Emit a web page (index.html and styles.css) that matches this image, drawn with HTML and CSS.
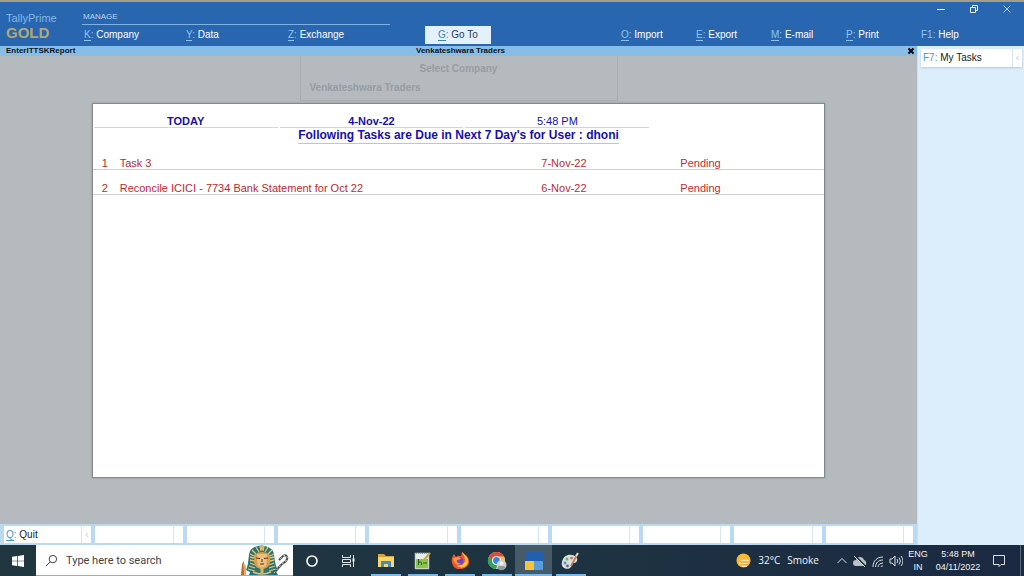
FILE: index.html
```html
<!DOCTYPE html>
<html lang="en">
<head>
<meta charset="utf-8">
<meta name="viewport" content="width=device-width, initial-scale=1">
<title>TallyPrime Gold</title>
<link rel="stylesheet" href="styles.css">
</head>
<body>
<header class="topbar">
  <div class="brand"><span class="brand-name">TallyPrime</span><span class="brand-tier">GOLD</span></div>
  <nav class="manage">
    <div class="manage-title">MANAGE</div>
    <div class="manage-items">
      <button class="menu"><span class="key line">K</span><span class="colon">:</span> Company</button>
      <button class="menu"><span class="key line">Y</span><span class="colon">:</span> Data</button>
      <button class="menu"><span class="key line">Z</span><span class="colon">:</span> Exchange</button>
    </div>
  </nav>
  <button class="menu goto"><span class="key line">G</span><span class="colon">:</span> Go To</button>
  <div class="right">
    <div class="window-controls">
      <button class="win" aria-label="Minimize"><svg viewBox="0 0 10 10"><path d="M1 5.500h8"/></svg></button>
      <button class="win" aria-label="Restore"><svg viewBox="0 0 10 10"><path d="M1.500 3.500h5v5h-5zM3.500 3.500v-2h5v5h-2"/></svg></button>
      <button class="win dim" aria-label="Close window"><svg viewBox="0 0 10 10"><path d="M1.500 1.500l7 7M8.500 1.500l-7 7"/></svg></button>
    </div>
    <nav class="right-items">
      <button class="menu"><span class="key line">O</span><span class="colon">:</span> Import</button>
      <button class="menu"><span class="key line">E</span><span class="colon">:</span> Export</button>
      <button class="menu"><span class="key line">M</span><span class="colon">:</span> E-mail</button>
      <button class="menu"><span class="key line">P</span><span class="colon">:</span> Print</button>
      <button class="menu"><span class="key">F1</span><span class="colon">:</span> Help</button>
    </nav>
  </div>
</header>

<div class="middle">
  <main class="main">
    <div class="titlebar">
      <span class="report-name">EnterITTSKReport</span>
      <span class="company">Venkateshwara Traders</span>
      <button class="close" aria-label="Close report"><svg viewBox="0 0 8 8"><path d="M1.500 1.500l5 5M6.500 1.500l-5 5"/></svg></button>
    </div>
    <div class="workspace">
      <div class="underlay">
        <div class="underlay-title">Select Company</div>
        <div class="underlay-item">Venkateshwara Traders</div>
      </div>
      <section class="report">
        <div class="today">
          <strong>TODAY</strong><strong>4-Nov-22</strong><span>5:48 PM</span>
        </div>
        <h1 class="heading"><span>Following Tasks are Due in Next 7 Day's for User : dhoni</span></h1>
        <table class="tasks">
          <colgroup><col class="c-no"><col class="c-task"><col class="c-date"><col class="c-status"></colgroup>
          <tbody>
            <tr><td class="no">1</td><td>Task 3</td><td>7-Nov-22</td><td>Pending</td></tr>
            <tr><td class="no">2</td><td>Reconcile ICICI - 7734 Bank Statement for Oct 22</td><td>6-Nov-22</td><td>Pending</td></tr>
          </tbody>
        </table>
      </section>
    </div>
    <div class="actions">
      <button class="action"><span class="action-text"><span class="key line">Q</span><span class="colon">:</span> Quit</span><span class="more">‹</span></button>
      <button class="action" aria-label="Empty 2"><span class="action-text"></span><span class="more"></span></button>
      <button class="action" aria-label="Empty 3"><span class="action-text"></span><span class="more"></span></button>
      <button class="action" aria-label="Empty 4"><span class="action-text"></span><span class="more"></span></button>
      <button class="action" aria-label="Empty 5"><span class="action-text"></span><span class="more"></span></button>
      <button class="action" aria-label="Empty 6"><span class="action-text"></span><span class="more"></span></button>
      <button class="action" aria-label="Empty 7"><span class="action-text"></span><span class="more"></span></button>
      <button class="action" aria-label="Empty 8"><span class="action-text"></span><span class="more"></span></button>
      <button class="action" aria-label="Empty 9"><span class="action-text"></span><span class="more"></span></button>
      <button class="action" aria-label="Empty 10"><span class="action-text"></span><span class="more"></span></button>
    </div>
  </main>
  <aside class="side">
    <button class="side-button"><span class="action-text"><span class="key">F7</span><span class="colon">:</span> My Tasks</span><span class="more">‹</span></button>
  </aside>
</div>

<footer class="taskbar">
  <button class="start" aria-label="Start"><svg viewBox="0 0 12 12"><path fill="#fff" d="M0 1.700L5.300 1v4.700H0zM6 .9L12 0v5.700H6zM0 6.300h5.300V11L0 10.300zM6 6.300h6V12l-6-.9z"/></svg></button>
  <div class="search">
    <svg class="lens" viewBox="0 0 14 14"><circle cx="8.500" cy="5.500" r="4"/><path d="M5.600 8.400L1 13"/></svg>
    <input type="search" aria-label="Search" placeholder="Type here to search">
    <svg class="pharaoh" viewBox="0 0 50 30">
      <path fill="#1f6f8a" d="M8 30l2-5h24l3 5z"/>
      <path fill="#2b7474" d="M5 25C8 19 7 11 9 6 13-1 27-1 32 6c2 5 1 13 5 19l-6 3H11z"/>
      <path fill="none" stroke="#e6c46c" stroke-width="1.300" d="M7 24l7 2M8 21l6 2M9 18l5 2M9 15l4 1M9 12l4 1M9 9l4 2M11 5l4 4M15 2l3 5M19 1l1 5M23 1l-1 5M27 2l-3 5M31 5l-4 4M33 9l-4 2M33 12l-4 1M33 15l-4 1M33 18l-5 2M34 21l-6 2M35 24l-7 2"/>
      <path fill="#d99b4c" d="M13 10c4-4 12-4 16 0v7c-1 5-4 7-8 7s-7-2-8-7z"/>
      <path fill="#ecc07c" d="M16 9h10v6l-1 6-4 2-4-2-1-6z"/>
      <path fill="none" stroke="#4c3423" d="M15 13l4 .5M23 13.500l4-.5M19 19h4M21 14v3"/>
      <path fill="#e1b251" d="M20 0h2v5h-2zM19.500 22h3v6h-3z"/>
      <path fill="none" stroke="#e3c071" stroke-width="1.500" d="M12 27q9 4 18 0"/>
      <path fill="none" stroke="#3b4d54" stroke-width="2" d="M33 28l7-8 5-4c3-4 0-7-3-5l-4 4"/>
      <path fill="none" stroke="#e2d6b0" stroke-dasharray="2 2" d="M33 28l7-8 5-4c3-4 0-7-3-5l-4 4"/>
      <path fill="#b36a2e" d="M0 30l1-11 2-3 1 14z"/><path fill="#ddad61" d="M2 18l3 3v9H3z"/>
    </svg>
  </div>
  <div class="apps">
    <button class="app" aria-label="Cortana"><svg viewBox="0 0 20 20"><circle cx="10" cy="10" r="5" fill="none" stroke="#f3f6f6" stroke-width="1.700"/></svg></button>
    <button class="app" aria-label="Task view"><svg viewBox="0 0 20 20"><path fill="none" stroke="#dfe6e8" d="M3.500 4v2.500h8V4M3.500 16v-2.500h8V16M3.500 8.500h8v3h-8zM14.500 4v12"/><path fill="#fff" d="M13.500 7.500h2v3h-2z"/></svg></button>
    <button class="app open" aria-label="File Explorer"><svg viewBox="0 0 20 20"><path fill="#dba336" d="M2 3h6l2 2h8v4H2z"/><path fill="#f7d66d" d="M2 6h16v10H2z"/><path fill="#4789c4" d="M5 10h10v6h-3v-3H8v3H5z"/></svg></button>
    <button class="app open" aria-label="Notepad++"><svg viewBox="0 0 20 20"><path fill="#e8eee9" stroke="#96a3a0" stroke-width=".7" d="M2 2h14v16H2z"/><path fill="#87c745" d="M3 8h12v9H3z"/><path stroke="#52636a" stroke-dasharray="1 1" d="M3 2h12"/><path fill="none" stroke="#315634" d="M5.500 8v6M5.500 12q2-3 3 0v2M10 12h4"/><path stroke="#d7a43a" stroke-width="2" d="M11 9l6-7"/></svg></button>
    <button class="app open" aria-label="Firefox"><svg viewBox="0 0 20 20"><path fill="#f3512b" d="M4 3l2 3c2-2 3-1 5-1l1-4c2 2 3 3 3 4l1-1c8 9-1 15-7 14C3 18-1 10 4 3z"/><path fill="#ffc93b" d="M12 1c1 3 3 4 3 8 0 5-6 7-9 4 3 6 12 4 12-3 0-4-3-6-6-9z"/><circle cx="9.500" cy="10" r="3.800" fill="#7544bc"/><path fill="#ff9635" d="M3 7l6-1 2 2-4 1c-1 2 1 4 4 3-3 4-8 0-8-5z"/></svg></button>
    <button class="app open" aria-label="Chrome"><svg viewBox="0 0 20 20"><circle cx="9.500" cy="9.500" r="8.500" fill="#e4e8e5"/><path fill="#dc4a3c" d="M2 5.500a8.500 8.500 0 0 1 15 0l-4 2H7l-2 3z"/><path fill="#efc344" d="M17 5.500a8.500 8.500 0 0 1-5 12l1-6-1-6z"/><path fill="#34a35a" d="M2 5.500l5 7 4 1-2 4.500C2 18-1 10 2 5.500z"/><circle cx="9.500" cy="9.500" r="4.500" fill="#fff"/><circle cx="9.500" cy="9.500" r="3.400" fill="#397fe0"/><circle cx="14.500" cy="14" r="5" fill="#cbd1d3"/><path fill="#8f9ba1" d="M10.500 17c0-3 8-3 8 0-3 3-6 3-8 0z"/><circle cx="14.500" cy="12.500" r="2" fill="#eef0ef"/></svg></button>
    <button class="app open active" aria-label="TallyPrime"><svg viewBox="0 0 20 20"><path fill="#235faf" d="M1 1h18v9H1z"/><path fill="#f6c33d" d="M1 10h9v9H1z"/><path fill="#579fdc" d="M10 10h9v9h-9z"/></svg></button>
    <button class="app open" aria-label="Paint"><svg viewBox="0 0 20 20"><path fill="#d8dfe0" d="M1 11C2 4 9 2 14 5c4 3 2 7-1 7-3 0-2 2-3 4-3 4-11 1-9-5z"/><circle cx="4" cy="12" r="1.400" fill="#429ac5"/><circle cx="6" cy="8" r="1.500" fill="#75b852"/><circle cx="10.500" cy="7" r="1.300" fill="#df5b48"/><circle cx="6.500" cy="15" r="1.400" fill="#71598d"/><path stroke="#bd8556" stroke-width="1.800" d="M10 15l6-11"/><path stroke="#e8d4bc" stroke-width="2" d="M15 5l2-3"/></svg></button>
  </div>
  <div class="tray">
    <button class="weather"><svg viewBox="0 0 16 16"><circle cx="8" cy="8" r="7.500" fill="#f5ba36"/><path fill="none" stroke="#ffe5ab" stroke-width="1.800" stroke-linecap="round" d="M6 8h7M4 11h8M7 14h4"/><path fill="none" stroke="#ec935b" d="M5 9.500h7M6 12.500h7"/></svg><span>32°C</span><span>Smoke</span></button>
    <div class="tray-icons">
      <button aria-label="Show hidden icons"><svg viewBox="0 0 14 14"><path d="M2.500 9L7 4.500 11.500 9"/></svg></button>
      <button aria-label="Cloud sync"><svg viewBox="0 0 14 14"><path fill="#b9c1c9" stroke="none" d="M3 12a3 3 0 0 1 0-6c1-4 7-4 8 0 3 1 3 6 0 6z"/><path stroke="#1c2a3c" stroke-width="2" d="M2 2l11 11"/><path d="M1 2l11 11"/></svg></button>
      <button aria-label="Network"><svg viewBox="0 0 14 14"><path d="M2 13C2 7 6 3 12 3M4.500 13C5 9 7 6 12 6M7 13c0-2 2-4 5-4M10 13c0-1 1-1 2-1"/></svg></button>
      <button aria-label="Volume"><svg viewBox="0 0 14 14"><path d="M1 5h2l3-3v10L3 9H1zM8 5q1.500 2 0 4M10 3.500q3 3.500 0 7M12 2q4 5 0 10"/></svg></button>
    </div>
    <button class="stack lang"><span>ENG</span><span>IN</span></button>
    <button class="stack clock"><span>5:48 PM</span><span>04/11/2022</span></button>
    <button class="notice" aria-label="Notifications"><svg viewBox="0 0 14 14"><path d="M1.500 1.500h11v9H9L7 12.500V10.500H1.500z"/></svg></button>
  </div>
</footer>
</body>
</html>
```
FILE: styles.css
```css
* { box-sizing: border-box; }

body {
  margin: 0;
  min-height: 100vh;
  display: flex;
  flex-direction: column;
  font: 11px/12px "Liberation Sans", Arial, sans-serif;
  background: #dceefb;
}

button {
  margin: 0;
  padding: 0;
  border: 0;
  background: none;
  font: inherit;
  color: inherit;
  text-align: left;
  white-space: nowrap;
}

svg { display: block; }

/* Top bar */
.topbar {
  display: flex;
  height: 46px;
  border-top: 2px solid #a3a08a;
  background: #2966b0;
  color: #fff;
}

.brand {
  display: flex;
  flex-direction: column;
  width: 82px;
  padding: 10px 0 0 6px;
}

.brand-name { color: #82b7ea; }

.brand-tier {
  font-size: 15px;
  line-height: 18px;
  font-weight: bold;
  color: #b3a873;
}

.manage {
  width: 308px;
  padding-top: 9px;
}

.manage-title {
  height: 14px;
  padding-left: 1px;
  border-bottom: 1px solid #7fb2e4;
  font-size: 8px;
  color: #b5d7f5;
}

.manage-items {
  display: grid;
  grid-template-columns: repeat(3, 1fr);
  padding: 3px 0 0 2px;
}

.menu {
  height: 14px;
  font-size: 10px;
  line-height: 12px;
}

.key, .colon { color: #8cc4f5; }
.line { border-bottom: 1px solid currentColor; }

.goto {
  align-self: flex-end;
  height: 18px;
  margin: 0 0 2px 35px;
  padding: 0 13px;
  background: #e2f1fc;
  color: #2c3a48;
}

.goto .key, .goto .colon { color: #3d83bd; }

.right {
  display: flex;
  flex-direction: column;
  margin-left: auto;
}

.window-controls {
  display: flex;
  justify-content: flex-end;
  gap: 23px;
  padding: 2px 12px 0 0;
}

.win svg {
  width: 10px;
  height: 10px;
  fill: none;
  stroke: #e8f2fc;
}

.win.dim svg { stroke: #a9c7e8; }

.right-items {
  display: grid;
  grid-template-columns: repeat(5, 75px);
  padding: 14px 28px 0 0;
}

/* Working area */
.middle {
  display: flex;
  flex: 1;
}

.main {
  display: flex;
  flex: 1;
  flex-direction: column;
}

.titlebar {
  display: grid;
  grid-template-columns: 1fr auto 1fr;
  height: 10px;
  padding: 0 2px 0 6px;
  background: #88bde8;
  font-size: 8px;
  line-height: 10px;
  font-weight: bold;
  color: #0a1420;
}

.close { justify-self: end; }

.close svg {
  width: 8px;
  height: 10px;
  fill: none;
  stroke: #000;
  stroke-width: 2;
}

.workspace {
  position: relative;
  display: flex;
  flex: 1;
  padding: 47px 10% 46px;
  background: #b5babe;
}

.underlay {
  position: absolute;
  top: 0;
  left: 50%;
  width: 318px;
  height: 45px;
  margin-left: -159px;
  padding: 7px 9px;
  border: 1px solid #a8adb1;
  border-top: 0;
  font-size: 10px;
  font-weight: bold;
  color: #989da1;
}

.underlay-title { text-align: center; }
.underlay-item { margin-top: 7px; }

.report {
  flex: 1;
  border: 1px solid #85898d;
  background: #fff;
  box-shadow: 0 0 2px #909498;
}

.today {
  display: grid;
  grid-template-columns: repeat(3, 1fr);
  gap: 2px;
  padding: 11px 175px 0 1px;
  text-align: center;
  color: #1610ac;
}

.today > * {
  border-bottom: 1px solid #d4d4d4;
}

.heading {
  margin: 0;
  text-align: center;
  font-size: 12px;
  line-height: 14px;
  color: #1610ac;
}

.heading span {
  display: inline-block;
  padding-bottom: 1px;
  border-bottom: 1px solid #c6c6b8;
}

.tasks {
  width: 100%;
  table-layout: fixed;
  border-collapse: collapse;
  color: #c0292f;
}

.tasks td {
  height: 25px;
  padding: 0;
  border-bottom: 1px solid #d0d0d0;
  vertical-align: bottom;
}

.tasks .no { padding-left: 9px; }
.c-no { width: 27px; }
.c-date { width: 19%; }
.c-status { width: 144px; }

.actions {
  display: grid;
  grid-template-columns: repeat(10, 1fr);
  gap: 4px;
  height: 21px;
  padding: 2px 4px 2px 4px;
  background: #bbd9f0;
}

.action, .side-button {
  display: flex;
  background: #fff;
  font-size: 10px;
  color: #222;
}

.action-text {
  flex: 1;
  align-self: center;
  padding-left: 2px;
}

.action .key, .action .colon,
.side-button .key, .side-button .colon { color: #4a9bc9; }

.more {
  align-self: stretch;
  display: grid;
  place-items: center;
  width: 10px;
  border-left: 1px solid #d8e4ee;
  color: #c4ccd4;
}

.side {
  width: 107px;
  padding: 3px 2px 0 3px;
  border-left: 1px solid #c8e2f6;
  background: #dceefb;
}

.side-button {
  width: 100%;
  height: 18px;
  box-shadow: 0 1px 2px #b7cbd9;
}

/* Taskbar */
.taskbar {
  display: flex;
  height: 31px;
  background: linear-gradient(90deg, #20373f, #1e3341 55%, #1b2942);
  color: #f2f4f6;
  font: 10px/13px "Open Sans", "Noto Sans", sans-serif;
}

.start {
  display: grid;
  place-items: center;
  width: 36px;
}

.start svg { width: 12px; height: 12px; }

.search {
  display: flex;
  align-items: center;
  width: 257px;
  padding: 0 2px 0 9px;
  border-bottom: 1px solid #a8a8a8;
  background: #fff;
}

.lens {
  width: 13px;
  height: 13px;
  fill: none;
  stroke: #333;
}

.search input {
  flex: 1;
  min-width: 0;
  height: 28px;
  padding: 0 0 0 8px;
  border: 0;
  outline: 0;
  background: none;
  font: 11px/13px Roboto, "Open Sans", sans-serif;
}

.search input::placeholder { color: #444; opacity: 1; }

.pharaoh { width: 50px; height: 30px; }

.apps { display: flex; }

.app {
  display: flex;
  align-items: center;
  justify-content: center;
  width: 37px;
}

.app svg { width: 20px; height: 20px; }

.open {
  background: linear-gradient(#76b9ed, #76b9ed) center bottom / 30px 2px no-repeat;
}

.active {
  background-color: #465b67;
  background-size: 100% 2px;
}

.tray {
  display: flex;
  align-items: center;
  margin-left: auto;
  padding-right: 3px;
}

.weather {
  display: flex;
  align-items: center;
  gap: 7px;
  margin-right: 16px;
}

.weather svg { width: 15px; height: 15px; }

.tray-icons { display: flex; gap: 4px; }

.tray-icons svg, .notice svg {
  width: 14px;
  height: 14px;
  fill: none;
  stroke: #dce1e6;
}

.stack {
  display: flex;
  flex-direction: column;
  align-items: center;
  font: 9px/13px "Liberation Sans", Arial, sans-serif;
}

.lang { width: 30px; }
.clock { width: 50px; }

.notice {
  display: flex;
  align-items: center;
  align-self: stretch;
  width: 38px;
  padding-left: 9px;
  border-right: 1px solid #58677a;
}
```
